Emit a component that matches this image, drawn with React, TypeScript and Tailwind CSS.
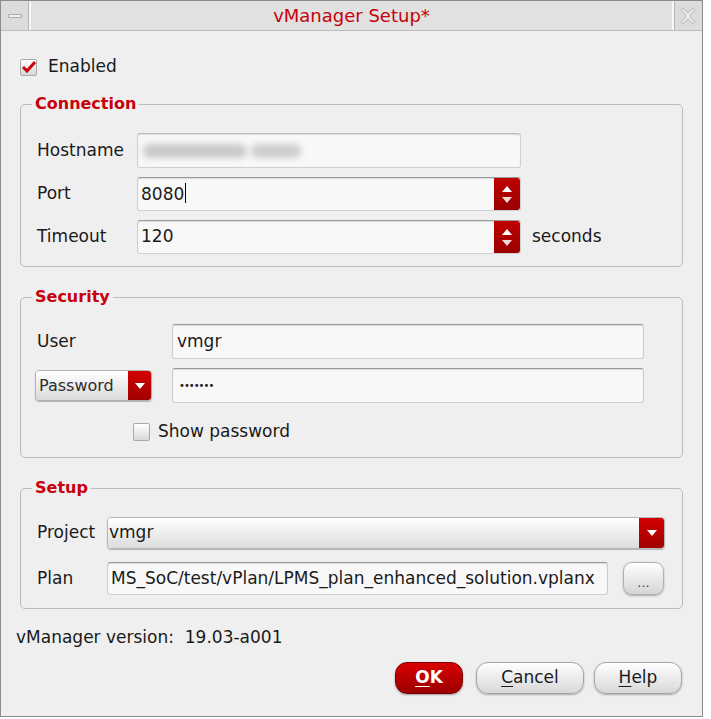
import React from 'react';

const font = { fontFamily: '"DejaVu Sans", Verdana, sans-serif' };

const Spinner = () => (
  <div className="flex w-[26px] flex-col items-center justify-center gap-[5px] self-stretch rounded-r-[3px] bg-gradient-to-b from-[#c00000] to-[#9a0000]">
    <svg width="10" height="6" viewBox="0 0 10 6"><path d="M0 6 L5 0 L10 6 Z" fill="#fff" /></svg>
    <svg width="10" height="6" viewBox="0 0 10 6"><path d="M0 0 L5 6 L10 0 Z" fill="#f2dada" /></svg>
  </div>
);

const DownArrow = () => (
  <svg width="10" height="6" viewBox="0 0 10 6"><path d="M0 0 L5 6 L10 0 Z" fill="#fff" /></svg>
);

const Legend = ({ children }: { children: React.ReactNode }) => (
  <legend className="-ml-[5px] px-[3px] text-[16px] font-bold leading-[20px] text-[#c8000a]">{children}</legend>
);

const inputCls =
  'flex items-center rounded-[3px] border border-[#cfcfcf] border-t-[#9a9a9a] bg-[#f8f8f8] shadow-[inset_0_1px_1px_rgba(0,0,0,0.12)] text-[17px] text-[#1a1a1a]';

export default function App() {
  return (
    <div className="h-[719px] w-[711px] bg-white" style={font}>
      <div className="flex h-[717px] w-[703px] flex-col border border-[#8c8c8c] bg-[#efefef] text-[#1a1a1a]">
        {/* title bar */}
        <div className="flex h-[30px] border-b border-[#bdbdbd] bg-[#e1e1e1]">
          <div className="flex w-[30px] items-center justify-center border-r-2 border-r-[#f7f7f7] bg-[#dcdcdc] shadow-[inset_-1px_0_0_#b5b5b5]">
            <div className="h-[4px] w-[14px] rounded-[1px] border border-[#a8a8a8] bg-[#f2f2f2]" />
          </div>
          <div className="flex flex-1 items-center justify-center text-[18px] text-[#c8000a]">vManager Setup*</div>
          <div className="flex w-[30px] items-center justify-center border-l-2 border-l-[#f7f7f7] bg-[#dcdcdc] shadow-[inset_1px_0_0_#b5b5b5]">
            <svg width="18" height="18" viewBox="0 0 18 18" fill="none" stroke="#c4c4c4" strokeWidth="1.2">
              <path d="M2 3 L4 1 L9 6 L14 1 L16 3 L11 8 L11 10 L16 15 L14 17 L9 12 L4 17 L2 15 L7 10 L7 8 Z" fill="#f0f0f0" />
            </svg>
          </div>
        </div>

        <div className="flex flex-1 flex-col px-[19px]">
          {/* enabled */}
          <div className="mt-[26px] flex h-[20px] items-center gap-[11px]">
            <div className="flex h-[17px] w-[17px] items-center justify-center rounded-[2px] border border-[#a9a9a9] bg-gradient-to-b from-white to-[#d6d6d6]">
              <svg width="14" height="12" viewBox="0 0 14 12">
                <path d="M1 6 L5 10 L13 1" stroke="#d00010" strokeWidth="3" fill="none" />
              </svg>
            </div>
            <span className="text-[17px]">Enabled</span>
          </div>

          {/* connection */}
          <fieldset className="mt-[17px] rounded-[5px] border border-[#bcbcbc] px-[16px] pb-[12px] pt-[19px]">
            <Legend>Connection</Legend>
            <div className="flex flex-col gap-[9px]">
              <div className="flex h-[35px] items-center">
                <span className="w-[100px] text-[17px]">Hostname</span>
                <div className={`${inputCls} h-[35px] w-[384px] gap-[4px] border-t-[#bbbbbb] pl-[5px]`}>
                  <div className="h-[14px] w-[104px] rounded-full bg-[#c9c9c9] blur-[3px]" />
                  <div className="h-[14px] w-[50px] rounded-full bg-[#cdcdcd] blur-[3px]" />
                </div>
              </div>
              <div className="flex h-[34px] items-center">
                <span className="w-[100px] text-[17px]">Port</span>
                <div className={`${inputCls} h-[34px] w-[384px] border-[#707070] pl-[3px]`}>
                  <span className="flex-1">8080<span className="ml-[1px] inline-block h-[20px] w-px translate-y-[3px] bg-black" /></span>
                  <Spinner />
                </div>
              </div>
              <div className="flex h-[34px] items-center">
                <span className="w-[100px] text-[17px]">Timeout</span>
                <div className={`${inputCls} h-[34px] w-[384px] pl-[3px]`}>
                  <span className="flex-1">120</span>
                  <Spinner />
                </div>
                <span className="ml-[11px] text-[17px]">seconds</span>
              </div>
            </div>
          </fieldset>

          {/* security */}
          <fieldset className="mt-[20px] rounded-[5px] border border-[#bcbcbc] px-[16px] pb-[15px] pt-[17px]">
            <Legend>Security</Legend>
            <div className="flex flex-col">
              <div className="flex h-[35px] items-center">
                <span className="w-[135px] text-[17px]">User</span>
                <div className={`${inputCls} h-[35px] w-[472px] pl-[4px]`}>vmgr</div>
              </div>
              <div className="mt-[9px] flex h-[35px] items-center">
                <div className="-ml-[2px] mr-[20px] flex h-[31px] w-[117px] overflow-hidden rounded-[4px] border border-[#b0b0b0] shadow-[0_1px_1px_rgba(0,0,0,0.25)]">
                  <div className="flex flex-1 items-center bg-gradient-to-b from-white to-[#dadada] pl-[3px] text-[16px] text-[#2e2e2e]">Password</div>
                  <div className="flex w-[23px] items-center justify-center bg-gradient-to-b from-[#d40000] to-[#a00000]"><DownArrow /></div>
                </div>
                <div className={`${inputCls} h-[35px] w-[472px] pl-[6px]`}>
                  <span className="text-[10px] tracking-[-1px] text-[#222]">•••••••</span>
                </div>
              </div>
              <div className="mt-[19px] flex h-[20px] items-center gap-[8px] pl-[96px]">
                <div className="h-[18px] w-[17px] rounded-[2px] border border-[#a9a9a9] bg-gradient-to-b from-white to-[#d9d9d9]" />
                <span className="text-[17px]">Show password</span>
              </div>
            </div>
          </fieldset>

          {/* setup */}
          <fieldset className="mt-[20px] rounded-[5px] border border-[#bcbcbc] px-[16px] pb-[13px] pt-[19px]">
            <Legend>Setup</Legend>
            <div className="flex flex-col">
              <div className="flex h-[32px] items-center">
                <span className="w-[70px] text-[17px]">Project</span>
                <div className="flex h-[32px] w-[558px] overflow-hidden rounded-[4px] border border-[#b5b5b5] shadow-[0_1px_1px_rgba(0,0,0,0.25)]">
                  <div className="flex flex-1 items-center bg-gradient-to-b from-white to-[#dcdcdc] pl-[1px] text-[17px]">vmgr</div>
                  <div className="flex w-[25px] items-center justify-center bg-gradient-to-b from-[#d40000] to-[#a00000]"><DownArrow /></div>
                </div>
              </div>
              <div className="mt-[13px] flex h-[33px] items-center">
                <span className="w-[70px] text-[17px]">Plan</span>
                <div className={`${inputCls} h-[33px] w-[501px] overflow-hidden whitespace-nowrap pl-[3px]`}>MS_SoC/test/vPlan/LPMS_plan_enhanced_solution.vplanx</div>
                <button className="ml-[15px] flex h-[33px] w-[41px] items-end justify-center rounded-[9px] border border-[#b0b0b0] bg-gradient-to-b from-white to-[#d5d5d5] pb-[5px] text-[13px] leading-none text-[#444] shadow-[0_1px_2px_rgba(0,0,0,0.3)]">...</button>
              </div>
            </div>
          </fieldset>

          <div className="-ml-[4px] mt-[16px] text-[17px]">vManager version:&nbsp; 19.03-a001</div>

          {/* buttons */}
          <div className="mt-[11px] flex justify-end">
            <button className="flex h-[32px] w-[68px] items-center justify-center rounded-[12px] border border-[#7a0000] bg-gradient-to-b from-[#d80000] to-[#9c0000] text-[17px] font-bold text-white shadow-[0_1px_2px_rgba(0,0,0,0.35)]">
              <span className="underline decoration-1 underline-offset-[3px]">O</span>K
            </button>
            <button className="ml-[13px] flex h-[32px] w-[108px] items-center justify-center rounded-[12px] border border-[#a5a5a5] bg-gradient-to-b from-white to-[#d8d8d8] text-[17px] shadow-[0_1px_2px_rgba(0,0,0,0.3)]">
              <span className="underline decoration-1 underline-offset-[3px]">C</span>ancel
            </button>
            <button className="ml-[10px] mr-[1px] flex h-[32px] w-[88px] items-center justify-center rounded-[12px] border border-[#a5a5a5] bg-gradient-to-b from-white to-[#d8d8d8] text-[17px] shadow-[0_1px_2px_rgba(0,0,0,0.3)]">
              <span className="underline decoration-1 underline-offset-[3px]">H</span>elp
            </button>
          </div>
        </div>
      </div>
    </div>
  );
}
